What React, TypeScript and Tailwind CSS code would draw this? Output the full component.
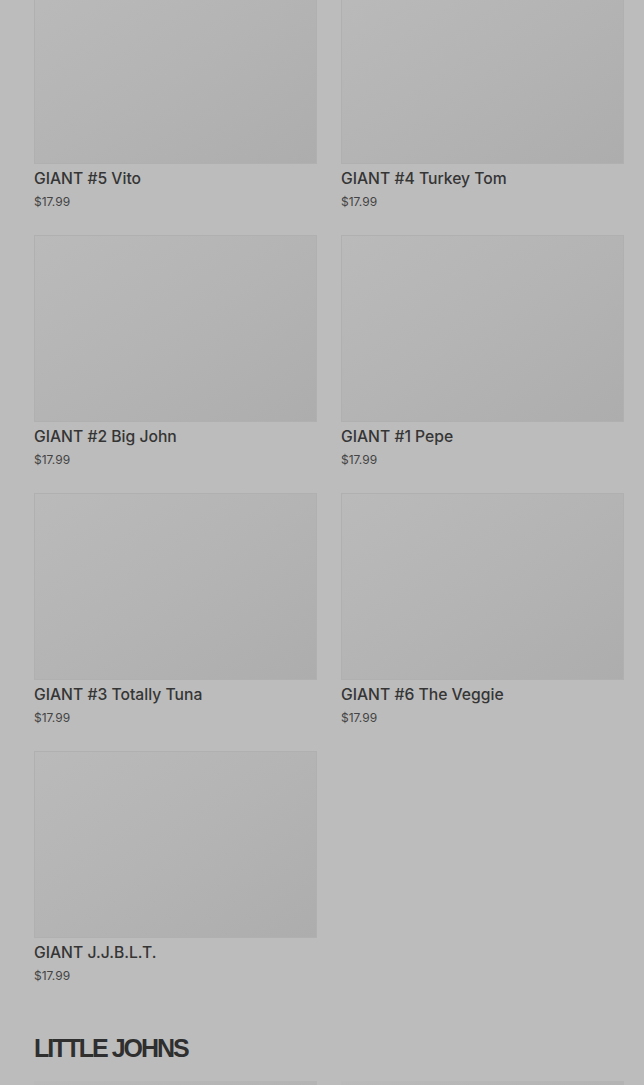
import React from 'react';

interface Product {
    id: number;
    title: string;
    price: string;
}

const giants: Product[] = [
    { id: 1, title: 'GIANT #5 Vito', price: '$17.99' },
    { id: 2, title: 'GIANT #4 Turkey Tom', price: '$17.99' },
    { id: 3, title: 'GIANT #2 Big John', price: '$17.99' },
    { id: 4, title: 'GIANT #1 Pepe', price: '$17.99' },
    { id: 5, title: 'GIANT #3 Totally Tuna', price: '$17.99' },
    { id: 6, title: 'GIANT #6 The Veggie', price: '$17.99' },
    { id: 7, title: 'GIANT J.J.B.L.T.', price: '$17.99' }
];

function ProductCard({ product }: { product: Product }) {
    return (
        <div className="flex flex-col">
            <div className="h-[187px] w-full bg-gradient-to-br from-[#bababa] via-[#b4b4b4] to-[#adadad] border border-[#b0b0b0]"></div>
            <h3 className="mt-[3px] text-[15.7px] leading-6 font-medium text-[#353535]">{product.title}</h3>
            <p className="text-[12px] leading-[21px] text-[#444444]">{product.price}</p>
        </div>
    );
}

export default function App() {
    return (
        <div className="min-h-screen bg-[#bcbcbc] overflow-hidden" style={{ fontFamily: 'Inter, "Open Sans", sans-serif' }}>
            <div className="pl-[34px] pr-[20px] -mt-[23px]">
                <div className="grid grid-cols-2 gap-x-6 gap-y-[23px]">
                    {giants.map((p) => (
                        <ProductCard key={p.id} product={p} />
                    ))}
                </div>

                <h2
                    className="mt-[45px] text-[25px] leading-[34px] font-bold tracking-[-2px] text-[#2f2f2f]"
                    style={{ fontFamily: '"Liberation Sans", Arial, sans-serif' }}
                >
                    LITTLE JOHNS
                </h2>

                <div className="mt-[16px] grid grid-cols-2 gap-x-6">
                    <div className="h-[187px] bg-gradient-to-br from-[#bababa] via-[#b4b4b4] to-[#adadad]"></div>
                    <div className="h-[187px] bg-gradient-to-br from-[#bababa] via-[#b4b4b4] to-[#adadad]"></div>
                </div>
            </div>
        </div>
    );
}
